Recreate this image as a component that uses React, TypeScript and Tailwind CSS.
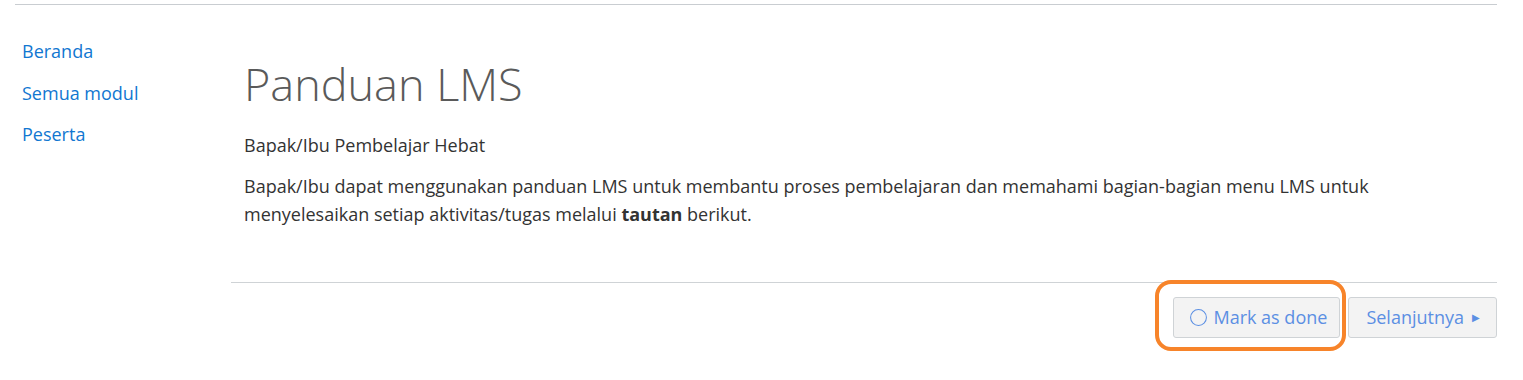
import { Circle } from "lucide-react";

const navLinks = ["Beranda", "Semua modul", "Peserta"];

const btn =
  "flex h-[41px] items-center rounded-[3px] border border-[#cfd3d6] bg-[#f3f3f3] text-[18px] text-[#5b8fe3]";

export default function App() {
  return (
    <div className="relative h-[380px] w-full bg-white font-['Open_Sans',sans-serif] text-[#333]">
      <div className="ml-[15px] w-[1482px]">
        <div className="mt-[4px] h-px bg-[#c9cdd1]" />

        <div className="flex">
          <nav className="w-[216px] shrink-0 pt-[26px]">
            <ul>
              {navLinks.map((label) => (
                <li key={label}>
                  <a href="#" className="block py-[7px] pl-[7px] text-[18px] leading-[27.5px] text-[#1177d1]">
                    {label}
                  </a>
                </li>
              ))}
            </ul>
          </nav>

          <main className="flex-1">
            <div className="pl-[13px] pt-[52px]">
              <h1 className="text-[45px] font-light leading-[54px] text-[#5a5a5a]">Panduan LMS</h1>
              <p className="mt-[20px] text-[18px] leading-[28px]">Bapak/Ibu Pembelajar Hebat</p>
              <p className="mt-[13px] text-[18px] leading-[28px]">
                Bapak/Ibu dapat menggunakan panduan LMS untuk membantu proses pembelajaran dan memahami
                bagian-bagian menu LMS untuk
                <br />
                menyelesaikan setiap aktivitas/tugas melalui <strong className="font-bold">tautan</strong> berikut.
              </p>
            </div>

            <div className="mt-[54px] h-px bg-[#cfd3d6]" />

            <div className="mt-[14px] flex justify-end gap-[8px]">
              <div className="relative">
                <button type="button" className={`${btn} gap-[5px] pl-[15px] pr-[12px]`}>
                  <Circle className="h-[19px] w-[19px]" strokeWidth={1.3} />
                  Mark as done
                </button>
                <div className="pointer-events-none absolute -left-[18px] -top-[17px] h-[71px] w-[191px] rounded-[16px] border-[4px] border-[#f7842a]" />
              </div>
              <button type="button" className={`${btn} gap-[8px] pl-[17px] pr-[16px]`}>
                Selanjutnya
                <span className="text-[10px]">&#9654;</span>
              </button>
            </div>
          </main>
        </div>
      </div>
    </div>
  );
}
